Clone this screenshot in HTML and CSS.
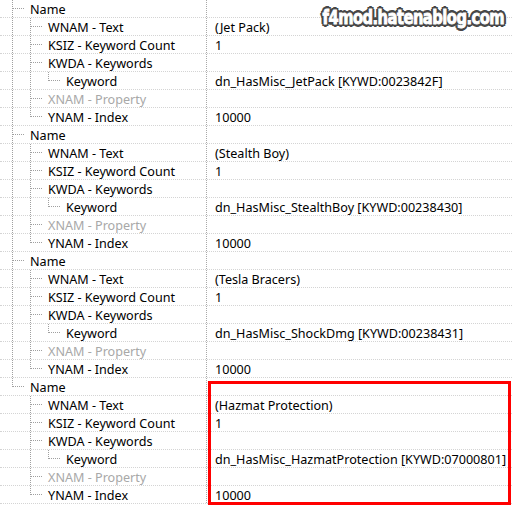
FILE: index.html
```html
<!DOCTYPE html>
<html lang="ja">
<head>
    <meta charset="UTF-8">
    <title>Keyword records</title>
    <link rel="stylesheet" href="styles.css">
</head>
<body>
    <div class="tree">
        <!-- Jet Pack -->
        <div class="row"><div class="label"><span class="g tee"><i></i></span><span class="txt">Name</span></div><div class="value"></div></div>
        <div class="row"><div class="label"><span class="g pipe"></span><span class="g tee"><i></i></span><span class="txt">WNAM - Text</span></div><div class="value">(Jet Pack)</div></div>
        <div class="row"><div class="label"><span class="g pipe"></span><span class="g tee"><i></i></span><span class="txt">KSIZ - Keyword Count</span></div><div class="value">1</div></div>
        <div class="row"><div class="label"><span class="g pipe"></span><span class="g tee"><i></i></span><span class="txt">KWDA - Keywords</span></div><div class="value"></div></div>
        <div class="row"><div class="label"><span class="g pipe"></span><span class="g pipe"></span><span class="g elbow"></span><span class="txt">Keyword</span></div><div class="value">dn_HasMisc_JetPack [KYWD:0023842F]</div></div>
        <div class="row"><div class="label"><span class="g pipe"></span><span class="g tee"><i></i></span><span class="txt off">XNAM - Property</span></div><div class="value"></div></div>
        <div class="row"><div class="label"><span class="g pipe"></span><span class="g elbow"></span><span class="txt">YNAM - Index</span></div><div class="value">10000</div></div>

        <!-- Stealth Boy -->
        <div class="row"><div class="label"><span class="g tee"><i></i></span><span class="txt">Name</span></div><div class="value"></div></div>
        <div class="row"><div class="label"><span class="g pipe"></span><span class="g tee"><i></i></span><span class="txt">WNAM - Text</span></div><div class="value">(Stealth Boy)</div></div>
        <div class="row"><div class="label"><span class="g pipe"></span><span class="g tee"><i></i></span><span class="txt">KSIZ - Keyword Count</span></div><div class="value">1</div></div>
        <div class="row"><div class="label"><span class="g pipe"></span><span class="g tee"><i></i></span><span class="txt">KWDA - Keywords</span></div><div class="value"></div></div>
        <div class="row"><div class="label"><span class="g pipe"></span><span class="g pipe"></span><span class="g elbow"></span><span class="txt">Keyword</span></div><div class="value">dn_HasMisc_StealthBoy [KYWD:00238430]</div></div>
        <div class="row"><div class="label"><span class="g pipe"></span><span class="g tee"><i></i></span><span class="txt off">XNAM - Property</span></div><div class="value"></div></div>
        <div class="row"><div class="label"><span class="g pipe"></span><span class="g elbow"></span><span class="txt">YNAM - Index</span></div><div class="value">10000</div></div>

        <!-- Tesla Bracers -->
        <div class="row"><div class="label"><span class="g tee"><i></i></span><span class="txt">Name</span></div><div class="value"></div></div>
        <div class="row"><div class="label"><span class="g pipe"></span><span class="g tee"><i></i></span><span class="txt">WNAM - Text</span></div><div class="value">(Tesla Bracers)</div></div>
        <div class="row"><div class="label"><span class="g pipe"></span><span class="g tee"><i></i></span><span class="txt">KSIZ - Keyword Count</span></div><div class="value">1</div></div>
        <div class="row"><div class="label"><span class="g pipe"></span><span class="g tee"><i></i></span><span class="txt">KWDA - Keywords</span></div><div class="value"></div></div>
        <div class="row"><div class="label"><span class="g pipe"></span><span class="g pipe"></span><span class="g elbow"></span><span class="txt">Keyword</span></div><div class="value">dn_HasMisc_ShockDmg [KYWD:00238431]</div></div>
        <div class="row"><div class="label"><span class="g pipe"></span><span class="g tee"><i></i></span><span class="txt off">XNAM - Property</span></div><div class="value"></div></div>
        <div class="row"><div class="label"><span class="g pipe"></span><span class="g elbow"></span><span class="txt">YNAM - Index</span></div><div class="value">10000</div></div>

        <!-- Hazmat Protection (last node) -->
        <div class="row"><div class="label"><span class="g elbow"></span><span class="txt">Name</span></div><div class="value"></div></div>
        <div class="row"><div class="label"><span class="g blank"></span><span class="g tee"><i></i></span><span class="txt">WNAM - Text</span></div><div class="value">(Hazmat Protection)</div></div>
        <div class="row"><div class="label"><span class="g blank"></span><span class="g tee"><i></i></span><span class="txt">KSIZ - Keyword Count</span></div><div class="value">1</div></div>
        <div class="row"><div class="label"><span class="g blank"></span><span class="g tee"><i></i></span><span class="txt">KWDA - Keywords</span></div><div class="value"></div></div>
        <div class="row"><div class="label"><span class="g blank"></span><span class="g pipe"></span><span class="g elbow"></span><span class="txt">Keyword</span></div><div class="value">dn_HasMisc_HazmatProtection [KYWD:07000801]</div></div>
        <div class="row"><div class="label"><span class="g blank"></span><span class="g tee"><i></i></span><span class="txt off">XNAM - Property</span></div><div class="value"></div></div>
        <div class="row"><div class="label"><span class="g blank"></span><span class="g elbow"></span><span class="txt">YNAM - Index</span></div><div class="value">10000</div></div>
    </div>

    <div class="highlight"></div>
    <div class="watermark">f4mod.hatenablog.com</div>
</body>
</html>
```

FILE: styles.css
```css
body {
    margin: 0;
    padding: 0;
    background-color: #fff;
    font-family: "Noto Sans", "DejaVu Sans", sans-serif;
    font-size: 12.6px;
    color: #000;
    height: 505px;
    overflow: hidden;
    position: relative;
}
.tree {
    width: 512px;
}
.row {
    display: flex;
    height: 18px;
    box-sizing: border-box;
    border-bottom: 1px dotted #d4d4d4;
}
.label {
    display: flex;
    width: 207px;
    box-sizing: border-box;
    border-right: 1px dotted #a8a8a8;
}
.value {
    padding-left: 8px;
    padding-top: 1px;
    line-height: 17px;
    white-space: nowrap;
}
.txt {
    padding-top: 1px;
    line-height: 17px;
    margin-left: 6px;
    white-space: nowrap;
}
.txt.off {
    color: #a8a8a8;
}

/* tree guides */
.g {
    flex: none;
    margin-left: 12px;
}
.pipe {
    width: 5px;
    border-left: 1px dotted #a0a0a0;
}
.blank {
    width: 6px;
}
.tee {
    width: 11px;
    border-left: 1px dotted #a0a0a0;
}
.tee i {
    display: block;
    height: 8px;
    border-bottom: 1px dotted #a0a0a0;
}
.elbow {
    width: 11px;
    height: 8px;
    align-self: flex-start;
    border-left: 1px dotted #a0a0a0;
    border-bottom: 1px dotted #a0a0a0;
}

.highlight {
    position: absolute;
    left: 208px;
    top: 381px;
    width: 303px;
    height: 124px;
    box-sizing: border-box;
    border: 3px solid #ff0000;
}
.watermark {
    position: absolute;
    top: 6px;
    right: 8px;
    font-family: "DejaVu Sans Condensed", "DejaVu Sans", sans-serif;
    font-stretch: condensed;
    font-weight: bold;
    font-size: 19px;
    letter-spacing: -0.6px;
    color: #fff;
    -webkit-text-stroke: 0.8px #fff;
    transform: scaleX(0.86);
    transform-origin: right center;
    text-shadow:
        3px 0 0 #474747, -3px 0 0 #474747, 0 3px 0 #474747, 0 -3px 0 #474747,
        2px 2px 0 #474747, -2px -2px 0 #474747, 2px -2px 0 #474747, -2px 2px 0 #474747,
        0 0 2px #474747;
}
```
